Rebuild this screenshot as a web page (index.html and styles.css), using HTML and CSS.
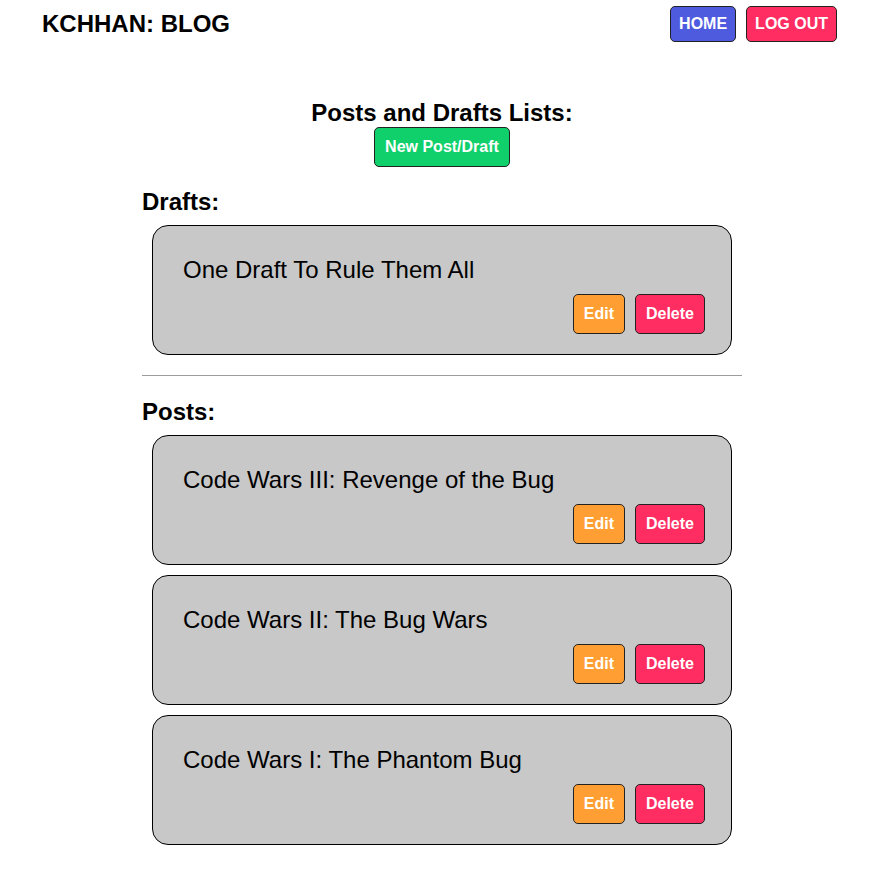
FILE: index.html
```html
<!DOCTYPE html>
<html lang="en">
<head>
<meta charset="utf-8">
<title>KCHHAN: BLOG</title>
<link rel="stylesheet" href="styles.css">
</head>
<body>
<header class="topbar">
  <div class="brand">KCHHAN: BLOG</div>
  <nav class="nav">
    <button class="btn btn-nav btn-blue">HOME</button>
    <button class="btn btn-nav btn-red">LOG OUT</button>
  </nav>
</header>
<main class="main">
  <h2 class="page-title">Posts and Drafts Lists:</h2>
  <div class="new-wrap"><button class="btn btn-green">New Post/Draft</button></div>

  <h2 class="section-title">Drafts:</h2>
  <div class="card">
    <div class="card-title">One Draft To Rule Them All</div>
    <div class="card-actions">
      <button class="btn btn-orange">Edit</button>
      <button class="btn btn-red">Delete</button>
    </div>
  </div>

  <hr class="divider">

  <h2 class="section-title section-after-divider">Posts:</h2>
  <div class="card">
    <div class="card-title">Code Wars III: Revenge of the Bug</div>
    <div class="card-actions">
      <button class="btn btn-orange">Edit</button>
      <button class="btn btn-red">Delete</button>
    </div>
  </div>
  <div class="card">
    <div class="card-title">Code Wars II: The Bug Wars</div>
    <div class="card-actions">
      <button class="btn btn-orange">Edit</button>
      <button class="btn btn-red">Delete</button>
    </div>
  </div>
  <div class="card">
    <div class="card-title">Code Wars I: The Phantom Bug</div>
    <div class="card-actions">
      <button class="btn btn-orange">Edit</button>
      <button class="btn btn-red">Delete</button>
    </div>
  </div>
</main>
</body>
</html>
```

FILE: styles.css
```css
* { box-sizing: border-box; }
html, body {
  margin: 0;
  padding: 0;
  background: #fff;
  color: #000;
  font-family: "Liberation Sans", Arial, sans-serif;
}
.topbar {
  display: flex;
  justify-content: space-between;
  align-items: center;
  height: 48px;
  padding: 0 49px 0 42px;
}
.brand {
  font-size: 24px;
  font-weight: bold;
}
.nav {
  display: flex;
  gap: 10px;
}
.btn {
  font-family: "Liberation Sans", Arial, sans-serif;
  font-size: 16px;
  font-weight: bold;
  line-height: 18px;
  color: #fff;
  border: 1px solid #222;
  border-radius: 5px;
  padding: 10px;
  cursor: pointer;
}
.btn-nav { padding: 8px; }
.btn-blue { background: #4e5bdf; }
.btn-red { background: #ff2d62; }
.btn-orange { background: #ff9f33; }
.btn-green { background: #0fd06a; }

.main {
  width: 600px;
  margin: 0 0 0 142px;
  padding-top: 51px;
}
.page-title {
  font-size: 24px;
  font-weight: bold;
  text-align: center;
  margin: 0;
  line-height: 28px;
}
.new-wrap {
  display: flex;
  justify-content: center;
}
.section-title {
  font-size: 24px;
  font-weight: bold;
  margin: 21px 0 9px;
  line-height: 28px;
}
.section-after-divider {
  margin-top: 22px;
}
.card {
  margin: 0 10px 10px;
  background: #c8c8c8;
  border: 1px solid #000;
  border-radius: 16px;
  padding: 30px 26px 20px 30px;
}
.card-title {
  font-size: 24px;
  line-height: 28px;
  margin-bottom: 10px;
}
.card-actions {
  display: flex;
  justify-content: flex-end;
  gap: 10px;
}
.divider {
  border: 0;
  border-top: 1px solid #9c9c9c;
  margin: 20px 0 0;
  height: 0;
}
```
